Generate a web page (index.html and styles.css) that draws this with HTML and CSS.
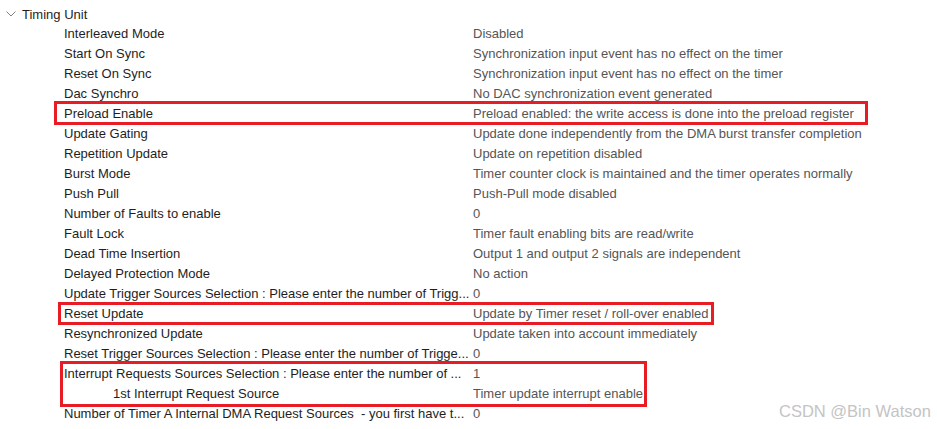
FILE: index.html
```html
<!DOCTYPE html>
<html>
  <head>
    <meta charset="utf-8" />
    <title>Timing Unit</title>
    <link rel="stylesheet" href="styles.css">
  </head>
  <body>
    <div class="tree">
      <div class="group">
        <svg class="chevron" viewBox="0 0 10 6">
          <path d="M0.5 0.5 L5 5 L9.5 0.5" />
        </svg>
        <span>Timing Unit</span>
      </div>
      <div class="row"><span class="label">Interleaved Mode</span><span class="value">Disabled</span></div>
      <div class="row"><span class="label">Start On Sync</span><span class="value">Synchronization input event has no effect on the timer</span></div>
      <div class="row"><span class="label">Reset On Sync</span><span class="value">Synchronization input event has no effect on the timer</span></div>
      <div class="row"><span class="label">Dac Synchro</span><span class="value">No DAC synchronization event generated</span></div>
      <div class="row"><span class="label">Preload Enable</span><span class="value">Preload enabled: the write access is done into the preload register</span></div>
      <div class="row"><span class="label">Update Gating</span><span class="value">Update done independently from the DMA burst transfer completion</span></div>
      <div class="row"><span class="label">Repetition Update</span><span class="value">Update on repetition disabled</span></div>
      <div class="row"><span class="label">Burst Mode</span><span class="value">Timer counter clock is maintained and the timer operates normally</span></div>
      <div class="row"><span class="label">Push Pull</span><span class="value">Push-Pull mode disabled</span></div>
      <div class="row"><span class="label">Number of Faults to enable</span><span class="value">0</span></div>
      <div class="row"><span class="label">Fault Lock</span><span class="value">Timer fault enabling bits are read/write</span></div>
      <div class="row"><span class="label">Dead Time Insertion</span><span class="value">Output 1 and output 2 signals are independent</span></div>
      <div class="row"><span class="label">Delayed Protection Mode</span><span class="value">No action</span></div>
      <div class="row"><span class="label">Update Trigger Sources Selection : Please enter the number of Trigg...</span><span class="value">0</span></div>
      <div class="row"><span class="label">Reset Update</span><span class="value">Update by Timer reset / roll-over enabled</span></div>
      <div class="row"><span class="label">Resynchronized Update</span><span class="value">Update taken into account immediately</span></div>
      <div class="row"><span class="label">Reset Trigger Sources Selection : Please enter the number of Trigge...</span><span class="value">0</span></div>
      <div class="row"><span class="label">Interrupt Requests Sources Selection : Please enter the number of ...</span><span class="value">1</span></div>
      <div class="row"><span class="label nested">1st Interrupt Request Source</span><span class="value">Timer update interrupt enable</span></div>
      <div class="row"><span class="label">Number of Timer A Internal DMA Request Sources &nbsp;- you first have t...</span><span class="value">0</span></div>

      <div class="mark mark-preload"></div>
      <div class="mark mark-reset"></div>
      <div class="mark mark-interrupt"></div>
      <div class="watermark">CSDN @Bin Watson</div>
    </div>
  </body>
</html>
```

FILE: styles.css
```css
* {
  margin: 0;
  padding: 0;
  box-sizing: border-box;
}
body {
  width: 937px;
  height: 429px;
  overflow: hidden;
  background: white;
  font-family: "Liberation Sans", Arial, sans-serif;
  font-size: 13px;
  color: #1e1e1e;
}
.tree {
  position: relative;
  padding-top: 4px;
}
.group {
  display: flex;
  align-items: center;
  height: 20px;
  padding-left: 6px;
}
.chevron {
  width: 10px;
  height: 6px;
  margin-right: 6px;
  fill: none;
  stroke: #808080;
  stroke-width: 1;
}
.row {
  display: grid;
  grid-template-columns: 409px 1fr;
  height: 20px;
  line-height: 20px;
  padding-left: 64px;
  white-space: nowrap;
}
.label {
  overflow: hidden;
}
.nested {
  padding-left: 49px;
}
.value {
  color: #555555;
}
.mark {
  position: absolute;
  border: 3px solid #e81c24;
}
.mark-preload {
  left: 54px;
  top: 101px;
  width: 814px;
  height: 24px;
}
.mark-reset {
  left: 58px;
  top: 302px;
  width: 656px;
  height: 23px;
}
.mark-interrupt {
  left: 60px;
  top: 361px;
  width: 587px;
  height: 46px;
}
.watermark {
  position: absolute;
  left: 779px;
  top: 402px;
  font-size: 16.5px;
  color: #c4c4c4;
}
```
